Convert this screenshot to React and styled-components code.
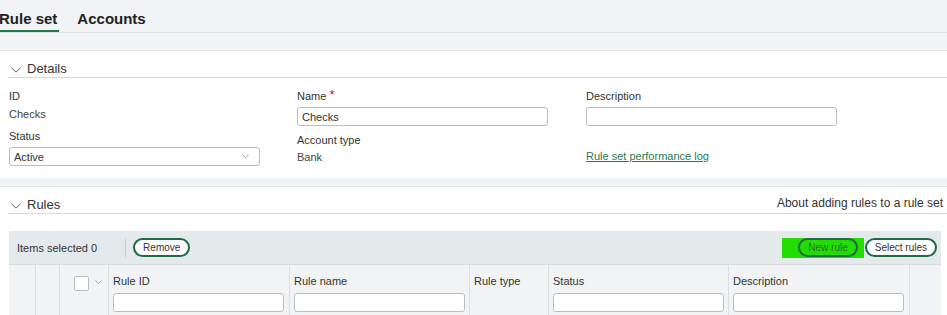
import styled, { createGlobalStyle } from 'styled-components';

const GlobalStyle = createGlobalStyle`
    body {
        margin: 0;
        background: #f1f3f4;
        font-family: "Liberation Sans", Arial, sans-serif;
        color: #333;
        overflow: hidden;
    }
`;

const Chevron = ({ size = 10, color = '#555' }) => (
    <svg width={size} height={size * 0.6} viewBox="0 0 10 6" fill="none">
        <path d="M0.5 0.8 L5 5.2 L9.5 0.8" stroke={color} strokeWidth="1" />
    </svg>
);

const App = () => {
    return (
        <>
            <GlobalStyle />
            <Page>
                <Tabs>
                    <Tab active>Rule set</Tab>
                    <Tab>Accounts</Tab>
                </Tabs>

                <Panel>
                    <SectionHeader>
                        <SectionTitle>
                            <Chevron size={10} />
                            Details
                        </SectionTitle>
                    </SectionHeader>
                    <Fields>
                        <Column>
                            <Label>ID</Label>
                            <Value>Checks</Value>
                            <Label top={9}>Status</Label>
                            <Select>
                                <span>Active</span>
                                <Chevron size={7} color="#777" />
                            </Select>
                        </Column>
                        <Column>
                            <Label>Name <Req>*</Req></Label>
                            <Input value="Checks" readOnly />
                            <Label top={8}>Account type</Label>
                            <Value top={0}>Bank</Value>
                        </Column>
                        <Column>
                            <Label>Description</Label>
                            <Input readOnly />
                            <Link href="#">Rule set performance log</Link>
                        </Column>
                    </Fields>
                </Panel>

                <Panel second>
                    <SectionHeader>
                        <SectionTitle>
                            <Chevron size={10} />
                            Rules
                        </SectionTitle>
                        <HelpText>About adding rules to a rule set</HelpText>
                    </SectionHeader>

                    <Toolbar>
                        <ToolLeft>
                            <Selected>Items selected 0</Selected>
                            <Divider />
                            <PillButton>Remove</PillButton>
                        </ToolLeft>
                        <ToolRight>
                            <Highlight>
                                <PillButton muted>New rule</PillButton>
                            </Highlight>
                            <PillButton>Select rules</PillButton>
                        </ToolRight>
                    </Toolbar>

                    <HeaderRow>
                        <Cell />
                        <Cell />
                        <CheckCell>
                            <CheckBox />
                            <Chevron size={7} color="#888" />
                        </CheckCell>
                        <Cell>
                            <ColLabel>Rule ID</ColLabel>
                            <FilterInput />
                        </Cell>
                        <Cell>
                            <ColLabel>Rule name</ColLabel>
                            <FilterInput />
                        </Cell>
                        <Cell>
                            <ColLabel>Rule type</ColLabel>
                        </Cell>
                        <Cell>
                            <ColLabel>Status</ColLabel>
                            <FilterInput />
                        </Cell>
                        <Cell>
                            <ColLabel>Description</ColLabel>
                            <FilterInput />
                        </Cell>
                        <Cell last />
                    </HeaderRow>
                </Panel>
            </Page>
        </>
    );
};
export default App;

const Page = styled.div`
    width: 947px;
    height: 315px;
    overflow: hidden;
`;

const Tabs = styled.div`
    display: flex;
    align-items: flex-end;
    gap: 17px;
    height: 32px;
    margin-left: -2px;
    border-bottom: 1px solid #d9dee1;
`;

const Tab = styled.div`
    font-size: 15px;
    font-weight: 600;
    color: #222;
    padding: 0 2px 3px 1px;
    border-bottom: 2px solid ${props => props.active ? '#1f7a48' : 'transparent'};
`;

const Panel = styled.div`
    background: #fff;
    margin-top: ${props => props.second ? '8px' : '17px'};
    border-top: 1px solid #e2e6e8;
    padding: 0 0 0 8px;
    height: ${props => props.second ? '200px' : 'auto'};
`;

const SectionHeader = styled.div`
    display: flex;
    align-items: flex-end;
    justify-content: space-between;
    height: 27px;
    box-sizing: border-box;
    padding-bottom: 1px;
    border-bottom: 1px solid #d5dadd;
`;

const SectionTitle = styled.div`
    display: flex;
    align-items: center;
    gap: 6px;
    font-size: 13px;
    color: #333;
    padding-left: 3px;
    padding-bottom: 0;

    svg {
        margin-top: 2px;
    }
`;

const HelpText = styled.div`
    font-size: 12px;
    color: #333;
    padding-right: 4px;
    padding-bottom: 2px;
`;

const Fields = styled.div`
    display: grid;
    grid-template-columns: 288px 289px 300px;
    padding: 12px 0 12px 1px;
`;

const Column = styled.div`
    display: flex;
    flex-direction: column;
    align-items: flex-start;
`;

const Label = styled.div`
    font-size: 11px;
    color: #333;
    line-height: 13px;
    margin-top: ${props => props.top || 0}px;
    margin-bottom: 4px;
`;

const Req = styled.span`
    color: #c8102e;
    font-size: 13px;
    vertical-align: top;
    line-height: 10px;
`;

const Value = styled.div`
    font-size: 11px;
    color: #444;
    line-height: 13px;
    margin-top: ${props => props.top ?? 1}px;
`;

const Input = styled.input`
    width: 251px;
    height: 19px;
    box-sizing: border-box;
    border: 1px solid #b8bec2;
    border-radius: 3px;
    font-family: inherit;
    font-size: 11px;
    color: #333;
    padding: 0 4px;
    outline: none;
`;

const Select = styled.div`
    display: flex;
    align-items: center;
    justify-content: space-between;
    width: 251px;
    height: 19px;
    box-sizing: border-box;
    border: 1px solid #b8bec2;
    border-radius: 3px;
    padding: 0 10px 0 4px;
    font-size: 11px;
    color: #333;
`;

const Link = styled.a`
    margin-top: 24px;
    font-size: 11px;
    color: #2b7a52;
    text-decoration: underline;
`;

const Toolbar = styled.div`
    display: flex;
    justify-content: space-between;
    align-items: center;
    width: 932px;
    height: 34px;
    margin-top: 17px;
    margin-left: 1px;
    box-sizing: border-box;
    background: #e4e9eb;
    border-bottom: 1px solid #d5dadd;
    padding: 0 4px 0 8px;
`;

const ToolLeft = styled.div`
    display: flex;
    align-items: center;
`;

const ToolRight = styled.div`
    display: flex;
    align-items: center;
    gap: 1px;
`;

const Selected = styled.div`
    font-size: 11px;
    color: #333;
`;

const Divider = styled.div`
    width: 1px;
    height: 18px;
    background: #c7ccd0;
    margin: 0 7px 0 28px;
`;

const PillButton = styled.button`
    height: 19px;
    box-sizing: border-box;
    border: 2px solid #1e6a45;
    border-radius: 10px;
    background: ${props => props.muted ? 'transparent' : '#fff'};
    color: ${props => props.muted ? '#2e6a44' : '#333'};
    font-family: inherit;
    font-size: 10px;
    padding: 0 8px;
    cursor: pointer;
`;

const Highlight = styled.span`
    display: flex;
    align-items: center;
    background: #22dd00;
    padding: 0 6px 0 16px;
    height: 20px;
`;

const HeaderRow = styled.div`
    display: grid;
    grid-template-columns: 27px 24px 49px 181px 180px 79px 180px 181px 31px;
    width: 932px;
    margin-left: 1px;
    height: 60px;
    background: #f1f3f4;
`;

const Cell = styled.div`
    border-right: ${props => props.last ? 'none' : '1px solid #d9dee1'};
    padding: 10px 5px 0 4px;
    box-sizing: border-box;
`;

const CheckCell = styled.div`
    display: flex;
    align-items: flex-start;
    gap: 6px;
    padding: 11px 0 0 14px;
    border-right: 1px solid #d9dee1;

    svg {
        margin-top: 4px;
    }
`;

const CheckBox = styled.div`
    width: 13px;
    height: 13px;
    background: #fff;
    border: 1px solid #b8bec2;
    border-radius: 2px;
`;

const ColLabel = styled.div`
    font-size: 11px;
    color: #333;
    line-height: 13px;
    margin-bottom: 5px;
`;

const FilterInput = styled.div`
    width: 171px;
    height: 19px;
    box-sizing: border-box;
    background: #fff;
    border: 1px solid #b8bec2;
    border-radius: 3px;
`;
